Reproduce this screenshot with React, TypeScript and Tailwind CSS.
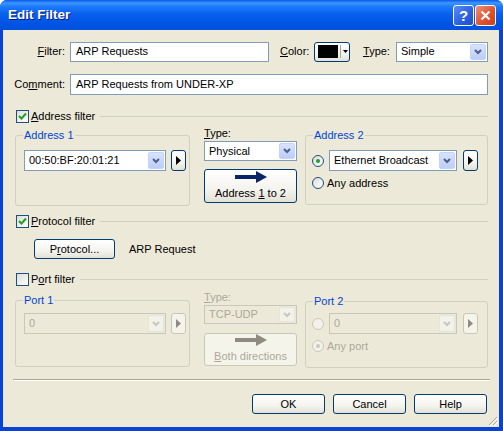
import React from 'react';

const FONT = { fontFamily: '"Liberation Sans", Arial, sans-serif' };

// XP style combobox
const Combo = ({ value, w, h = 21, disabled = false }: { value: string; w: string; h?: number; disabled?: boolean }) => (
  <div
    className={`flex items-stretch border ${disabled ? 'border-[#C9C7BA] bg-[#ECE9D8]' : 'border-[#7F9DB9] bg-white'} ${w}`}
    style={{ height: h }}
  >
    <span className={`flex-1 flex items-center pl-[4px] text-[11px] ${disabled ? 'text-[#ACA899]' : 'text-black'}`}>{value}</span>
    <span
      className={`w-[16px] m-[1px] rounded-[2px] flex items-center justify-center border ${
        disabled
          ? 'border-[#E6E4DA] bg-[#F2F1EA]'
          : 'border-[#C3D3FD] bg-[linear-gradient(180deg,#D8E3FD_0%,#BBCDF9_100%)]'
      }`}
    >
      <svg width="8" height="6" viewBox="0 0 8 6">
        <polyline points="1,1 4,4 7,1" fill="none" stroke={disabled ? '#C9C7BA' : '#4D6185'} strokeWidth="2" />
      </svg>
    </span>
  </div>
);

const Btn = ({ children, className = '', disabled = false }: { children: React.ReactNode; className?: string; disabled?: boolean }) => (
  <div
    className={`flex flex-col items-center justify-center rounded-[3px] border text-[11px] ${
      disabled
        ? 'border-[#C9C7BA] bg-[#F5F4EA] text-[#ACA899]'
        : 'border-[#003C74] bg-[linear-gradient(180deg,#FFFFFF_0%,#F4F3EE_60%,#E3E1D6_100%)] text-black'
    } ${className}`}
  >
    {children}
  </div>
);

const ArrowBtn = ({ disabled = false }: { disabled?: boolean }) => (
  <Btn className="w-[15px] h-[21px]" disabled={disabled}>
    <svg width="5" height="9" viewBox="0 0 5 9">
      <polygon points="0,0 5,4.5 0,9" fill={disabled ? '#8E8C80' : '#000'} />
    </svg>
  </Btn>
);

const Check = ({ checked }: { checked: boolean }) => (
  <span className="w-[13px] h-[13px] border border-[#1C5180] bg-[linear-gradient(135deg,#DCDCD7_0%,#FFFFFF_100%)] flex items-center justify-center shrink-0">
    {checked && (
      <svg width="9" height="9" viewBox="0 0 9 9">
        <polyline points="1,4 3.5,6.5 8,1.5" fill="none" stroke="#21A121" strokeWidth="2" />
      </svg>
    )}
  </span>
);

const Radio = ({ checked, disabled = false }: { checked: boolean; disabled?: boolean }) => (
  <span
    className={`w-[12px] h-[12px] rounded-full border flex items-center justify-center shrink-0 ${
      disabled ? 'border-[#CAC8BB] bg-[#F2F1EA]' : 'border-[#1C5180] bg-[linear-gradient(135deg,#DCDCD7_0%,#FFFFFF_100%)]'
    }`}
  >
    {checked && <span className={`w-[4px] h-[4px] rounded-full ${disabled ? 'bg-[#CAC8BB]' : 'bg-[#21A121]'}`} />}
  </span>
);

const CheckRow = ({ checked, children }: { checked: boolean; children: React.ReactNode }) => (
  <div className="flex items-center h-[13px] ml-[13px] mr-[11px]">
    <Check checked={checked} />
    <span className="ml-[2px] text-[11px] text-black whitespace-nowrap">{children}</span>
    <span className="flex-1 ml-[5px] border-t border-[#D0D0BF]" />
  </div>
);

const Group = ({ label, className, children }: { label: string; className: string; children: React.ReactNode }) => (
  <div className={`relative rounded-[3px] border border-[#D0D0BF] ${className}`}>
    <span className="absolute -top-[8px] left-[7px] bg-[#ECE9D8] px-[1px] text-[11px] leading-[14px] text-[#0046D5]">{label}</span>
    {children}
  </div>
);

const BigArrow = ({ color }: { color: string }) => (
  <svg width="32" height="12" viewBox="0 0 32 12">
    <rect x="0" y="4" width="22" height="4" fill={color} />
    <polygon points="21,0 32,6 21,12" fill={color} />
  </svg>
);

export default function App() {
  return (
    <div className="w-[503px] h-[431px] flex flex-col bg-[#0842D6] rounded-t-[7px] overflow-hidden" style={FONT}>
      {/* title bar */}
      <div className="h-[30px] flex items-center bg-[linear-gradient(180deg,#0A5AE8_0%,#3D95FF_10%,#1C7BFA_22%,#0A61EE_45%,#0055E5_75%,#0050DC_100%)]">
        <span className="ml-[8px] text-[13.5px] font-bold text-white [text-shadow:1px_1px_0_#0A1883]">Edit Filter</span>
        <div className="ml-auto mr-[7px] flex gap-[1px]">
          <span className="w-[21px] h-[21px] rounded-[3px] border border-white bg-[linear-gradient(135deg,#5B8CF5_0%,#2A5FE0_60%,#1E4FD0_100%)] flex items-center justify-center text-white text-[15px] font-bold leading-none">
            ?
          </span>
          <span className="w-[21px] h-[21px] rounded-[3px] border border-white bg-[linear-gradient(135deg,#F0917A_0%,#E0532F_55%,#C8401E_100%)] flex items-center justify-center">
            <svg width="11" height="11" viewBox="0 0 11 11">
              <path d="M1.5 1.5 L9.5 9.5 M9.5 1.5 L1.5 9.5" stroke="#fff" strokeWidth="2.2" />
            </svg>
          </span>
        </div>
      </div>

      {/* body */}
      <div className="relative flex-1 flex flex-col ml-[3px] mr-[4px] mb-[4px] bg-[#ECE9D8] text-[11px] text-black">
        {/* filter row */}
        <div className="flex items-center h-[21px] mt-[11px]">
          <span className="w-[62px] text-right">
            <u>F</u>ilter:
          </span>
          <div className="ml-[5px] w-[199px] h-[20px] border border-[#7F9DB9] bg-white flex items-center pl-[5px]">ARP Requests</div>
          <span className="ml-[11px] w-[34px]">
            <u>C</u>olor:
          </span>
          <div className="w-[36px] h-[20px] rounded-[3px] border border-[#003C74] bg-[linear-gradient(180deg,#FFFFFF_0%,#F0EFEA_70%,#E3E1D6_100%)] flex items-center pl-[3px]">
            <span className="w-[20px] h-[13px] bg-black" />
            <span className="ml-[2px] h-[13px] border-l border-[#ACA899]" />
            <svg className="ml-[2px]" width="5" height="3" viewBox="0 0 5 3">
              <polygon points="0,0 5,0 2.5,3" fill="#000" />
            </svg>
          </div>
          <span className="ml-[13px] w-[33px]">
            <u>T</u>ype:
          </span>
          <Combo value="Simple" w="w-[92px]" h={20} />
        </div>

        {/* comment row */}
        <div className="flex items-center h-[21px] mt-[12px]">
          <span className="w-[62px] text-right">
            Co<u>m</u>ment:
          </span>
          <div className="ml-[5px] w-[418px] h-[21px] border border-[#7F9DB9] bg-white flex items-center pl-[5px]">ARP Requests from UNDER-XP</div>
        </div>

        {/* address filter */}
        <div className="mt-[15px]">
          <CheckRow checked>
            <u>A</u>ddress filter
          </CheckRow>
        </div>
        <div className="flex items-start mt-[4px]">
          <Group label="Address 1" className="ml-[12px] mt-[8px] w-[175px] h-[71px]">
            <div className="flex pl-[8px] pt-[14px]">
              <Combo value="00:50:BF:20:01:21" w="w-[142px]" />
              <div className="ml-[5px]">
                <ArrowBtn />
              </div>
            </div>
          </Group>
          <div className="ml-[14px] w-[93px] flex flex-col">
            <span className="h-[13px] leading-[13px]">
              <u>T</u>ype:
            </span>
            <div className="mt-[1px]">
              <Combo value="Physical" w="w-[93px]" h={20} />
            </div>
            <Btn className="mt-[8px] h-[34px] w-[93px]">
              <BigArrow color="#0A246A" />
              <span className="mt-[2px]">
                Address <u>1</u> to 2
              </span>
            </Btn>
          </div>
          <Group label="Address 2" className="ml-[8px] mt-[8px] w-[183px] h-[70px]">
            <div className="flex flex-col pl-[6px] pt-[14px]">
              <div className="flex items-center">
                <Radio checked />
                <div className="ml-[5px]">
                  <Combo value="Ethernet Broadcast" w="w-[128px]" />
                </div>
                <div className="ml-[6px]">
                  <ArrowBtn />
                </div>
              </div>
              <div className="flex items-center mt-[4px]">
                <Radio checked={false} />
                <span className="ml-[3px]">Any address</span>
              </div>
            </div>
          </Group>
        </div>

        {/* protocol filter */}
        <div className="mt-[9px]">
          <CheckRow checked>
            <u>P</u>rotocol filter
          </CheckRow>
        </div>
        <div className="flex items-center mt-[11px]">
          <Btn className="ml-[31px] w-[81px] h-[20px]">
            <span>
              P<u>r</u>otocol...
            </span>
          </Btn>
          <span className="ml-[14px]">ARP Request</span>
        </div>

        {/* port filter */}
        <div className="mt-[14px]">
          <CheckRow checked={false}>
            P<u>o</u>rt filter
          </CheckRow>
        </div>
        <div className="flex items-start mt-[5px]">
          <Group label="Port 1" className="ml-[12px] mt-[9px] w-[175px] h-[67px]">
            <div className="flex pl-[8px] pt-[12px]">
              <Combo value="0" w="w-[142px]" disabled />
              <div className="ml-[5px]">
                <ArrowBtn disabled />
              </div>
            </div>
          </Group>
          <div className="ml-[14px] w-[93px] flex flex-col text-[#ACA899]">
            <span className="h-[13px] leading-[13px]">
              <u>T</u>ype:
            </span>
            <div className="mt-[1px]">
              <Combo value="TCP-UDP" w="w-[93px]" h={19} disabled />
            </div>
            <Btn className="mt-[9px] h-[33px] w-[93px]" disabled>
              <BigArrow color="#8E8C80" />
              <span className="mt-[2px]">
                <u>B</u>oth directions
              </span>
            </Btn>
          </div>
          <Group label="Port 2" className="ml-[8px] mt-[10px] w-[183px] h-[67px]">
            <div className="flex flex-col pl-[6px] pt-[11px]">
              <div className="flex items-center">
                <Radio checked={false} disabled />
                <div className="ml-[5px]">
                  <Combo value="0" w="w-[128px]" disabled />
                </div>
                <div className="ml-[6px]">
                  <ArrowBtn disabled />
                </div>
              </div>
              <div className="flex items-center mt-[4px] text-[#ACA899]">
                <Radio checked disabled />
                <span className="ml-[3px]">Any port</span>
              </div>
            </div>
          </Group>
        </div>

        {/* separator */}
        <div className="mt-[11px] ml-[10px] mr-[9px] border-t border-[#ACA899] border-b border-b-white" />

        {/* buttons */}
        <div className="flex justify-end gap-[8px] mt-[13px] mr-[12px]">
          <Btn className="w-[73px] h-[20px]">OK</Btn>
          <Btn className="w-[73px] h-[20px]">Cancel</Btn>
          <Btn className="w-[73px] h-[20px]">Help</Btn>
        </div>

        {/* size grip */}
        <svg className="absolute right-[1px] bottom-[1px]" width="11" height="11" viewBox="0 0 11 11">
          <path d="M10 2 L2 10 M10 6 L6 10" stroke="#ACA899" strokeWidth="1" />
          <path d="M11 3 L3 11 M11 7 L7 11" stroke="#fff" strokeWidth="1" />
        </svg>
      </div>
    </div>
  );
}
